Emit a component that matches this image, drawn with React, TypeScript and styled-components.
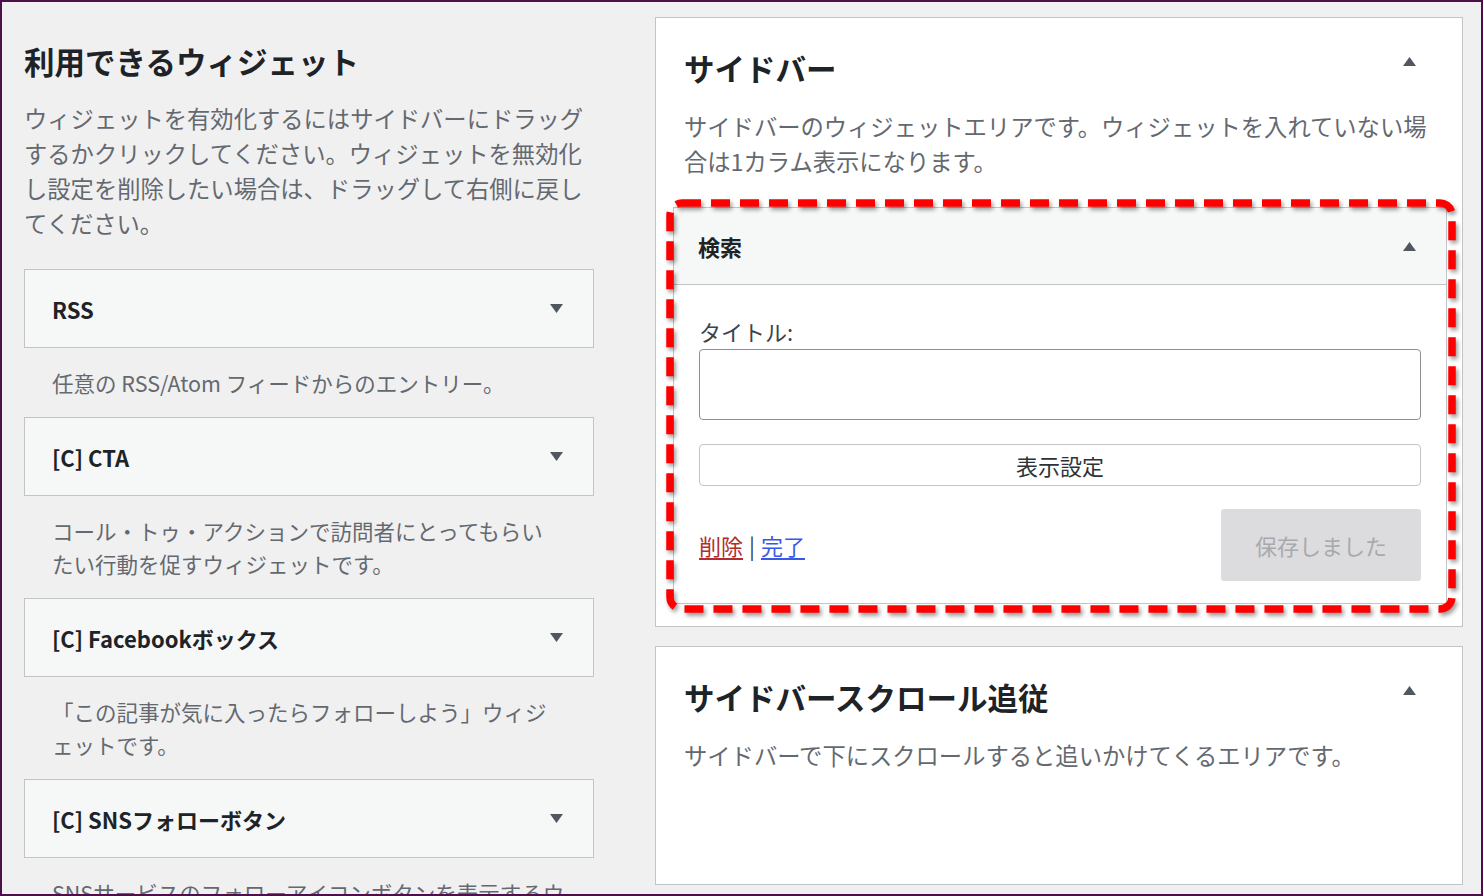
import React from 'react';
import styled, { createGlobalStyle } from 'styled-components';

const GlobalStyle = createGlobalStyle`
	html, body {
		margin: 0;
		padding: 0;
		background: #f0f0f1;
		overflow: hidden;
	}
	* {
		box-sizing: border-box;
	}
`;

const Frame = styled.div`
	width: 1483px;
	height: 896px;
	border: 2px solid #4d0f4c;
	background: #f0f0f1;
	display: flex;
	gap: 61px;
	padding: 15px 18px 0 22px;
	overflow: hidden;
	font-family: "Noto Sans CJK JP", "Noto Sans", sans-serif;
	color: #1d2327;
	line-break: loose;
`;

const LeftColumn = styled.section`
	width: 570px;
	flex-shrink: 0;
	padding-top: 25px;
`;

const RightColumn = styled.section`
	flex: 1;
	display: flex;
	flex-direction: column;
	gap: 19px;
`;

const Heading = styled.h2`
	margin: 0;
	font-size: 30.5px;
	line-height: 39px;
	font-weight: 700;
	color: #1d2327;
`;

const Intro = styled.p`
	margin: 20px 0 28px;
	font-size: 23.3px;
	line-height: 35px;
	color: #646970;
`;

const WidgetCard = styled.div`
	height: 79px;
	display: flex;
	align-items: center;
	justify-content: space-between;
	padding: 0 30px 0 27px;
	background: #f6f7f7;
	border: 1px solid #c3c4c7;
`;

const CardTitle = styled.h3`
	margin: 0;
	font-size: 22px;
	font-weight: 700;
	color: #1d2327;
`;

const CardDesc = styled.p<{ $narrow?: boolean }>`
	margin: 18px 0;
	padding: 0 ${(p) => (p.$narrow ? '40px' : '28px')} 0 28px;
	font-size: 21.5px;
	line-height: 33px;
	color: #646970;
`;

const SidebarBox = styled.div`
	background: #fff;
	border: 1px solid #c3c4c7;
	flex-shrink: 0;
`;

const BoxHeader = styled.div`
	display: flex;
	justify-content: space-between;
	align-items: flex-start;
	padding: 31px 46px 0 28px;
`;

const BoxTitle = styled.h2`
	margin: 0;
	font-size: 30.5px;
	line-height: 39px;
	font-weight: 700;
	color: #1d2327;
`;

const BoxCaret = styled.span`
	display: flex;
	margin-top: 8px;
`;

const BoxDesc = styled.p`
	margin: 21px 0 0;
	padding: 0 28px;
	font-size: 23.3px;
	line-height: 35px;
	color: #646970;
`;

const WidgetList = styled.div<{ $empty?: boolean }>`
	padding: 28px 15px 22px 17px;
	min-height: ${(p) => (p.$empty ? '111px' : 'auto')};
`;

const Marked = styled.div`
	position: relative;
`;

const Annotation = styled.svg`
	position: absolute;
	left: -8px;
	top: -8px;
	pointer-events: none;
	filter: drop-shadow(2px 3px 2px rgba(0, 0, 0, 0.4));
`;

const Widget = styled.div`
	border: 1px solid #c3c4c7;
	background: #fff;
`;

const WidgetHeader = styled.div`
	height: 77px;
	display: flex;
	align-items: center;
	justify-content: space-between;
	padding: 0 30px 0 24px;
	background: #f6f7f7;
	border-bottom: 1px solid #c3c4c7;
`;

const WidgetTitle = styled.h3`
	margin: 0;
	font-size: 22px;
	font-weight: 700;
	color: #1d2327;
`;

const WidgetBody = styled.div`
	padding: 30px 25px 22px 25px;
`;

const Label = styled.label`
	display: block;
	font-size: 22px;
	line-height: 32px;
	color: #3c434a;
`;

const TextInput = styled.input`
	display: block;
	width: 100%;
	height: 71px;
	margin-top: 2px;
	border: 1px solid #8c8f94;
	border-radius: 4px;
	background: #fff;
	font-size: 22px;
	padding: 0 12px;
`;

const WideButton = styled.button`
	display: block;
	width: 100%;
	height: 42px;
	margin-top: 24px;
	border: 1px solid #c3c4c7;
	border-radius: 4px;
	background: #fff;
	font-family: inherit;
	font-size: 22px;
	color: #2c3338;
`;

const Footer = styled.div`
	display: flex;
	align-items: center;
	justify-content: space-between;
	margin-top: 23px;
`;

const Links = styled.div`
	font-size: 22px;
	color: #3c434a;
	display: flex;
	gap: 6px;
`;

const TextLink = styled.a<{ $danger?: boolean }>`
	color: ${(p) => (p.$danger ? '#b32d2e' : '#3858e9')};
	text-decoration: underline;
	text-underline-offset: 3px;
`;

const SaveButton = styled.button`
	width: 200px;
	height: 72px;
	border: 0;
	border-radius: 3px;
	background: #dcdcde;
	color: #a7aaad;
	font-family: inherit;
	font-size: 22px;
`;

function Caret({ up }: { up?: boolean }) {
	return (
		<svg width="13" height="9" viewBox="0 0 13 9">
			<path d={up ? 'M0 9 L6.5 0 L13 9 Z' : 'M0 0 L13 0 L6.5 9 Z'} fill="#50575e" />
		</svg>
	);
}

const available = [
	{ title: 'RSS', desc: '任意の RSS/Atom フィードからのエントリー。' },
	{ title: '[C] CTA', desc: 'コール・トゥ・アクションで訪問者にとってもらいたい行動を促すウィジェットです。', narrow: true },
	{ title: '[C] Facebookボックス', desc: '「この記事が気に入ったらフォローしよう」ウィジェットです。' },
	{ title: '[C] SNSフォローボタン', desc: 'SNSサービスのフォローアイコンボタンを表示するウィジェットです。' },
];

export default function App() {
	return (
		<>
			<GlobalStyle />
			<Frame>
				<LeftColumn>
					<Heading>利用できるウィジェット</Heading>
					<Intro>
						ウィジェットを有効化するにはサイドバーにドラッグするかクリックしてください。ウィジェットを無効化し設定を削除したい場合は、ドラッグして右側に戻してください。
					</Intro>
					{available.map((w) => (
						<div key={w.title}>
							<WidgetCard>
								<CardTitle>{w.title}</CardTitle>
								<Caret />
							</WidgetCard>
							<CardDesc $narrow={w.narrow}>{w.desc}</CardDesc>
						</div>
					))}
				</LeftColumn>

				<RightColumn>
					<SidebarBox>
						<BoxHeader>
							<BoxTitle>サイドバー</BoxTitle>
							<BoxCaret>
								<Caret up />
							</BoxCaret>
						</BoxHeader>
						<BoxDesc>サイドバーのウィジェットエリアです。ウィジェットを入れていない場合は1カラム表示になります。</BoxDesc>
						<WidgetList>
							<Marked>
								<Widget>
									<WidgetHeader>
										<WidgetTitle>検索</WidgetTitle>
										<Caret up />
									</WidgetHeader>
									<WidgetBody>
										<Label htmlFor="search-title">タイトル:</Label>
										<TextInput id="search-title" type="text" />
										<WideButton type="button">表示設定</WideButton>
										<Footer>
											<Links>
												<TextLink $danger href="#">削除</TextLink>
												<span>|</span>
												<TextLink href="#">完了</TextLink>
											</Links>
											<SaveButton type="button" disabled>保存しました</SaveButton>
										</Footer>
									</WidgetBody>
								</Widget>
								<Annotation width="792" height="414" viewBox="0 0 792 414">
									<rect
										x="5"
										y="4"
										width="782"
										height="406"
										rx="12"
										fill="none"
										stroke="#ff0000"
										strokeWidth="7.5"
										strokeDasharray="19 10"
									/>
								</Annotation>
							</Marked>
						</WidgetList>
					</SidebarBox>

					<SidebarBox>
						<BoxHeader>
							<BoxTitle>サイドバースクロール追従</BoxTitle>
							<BoxCaret>
								<Caret up />
							</BoxCaret>
						</BoxHeader>
						<BoxDesc>サイドバーで下にスクロールすると追いかけてくるエリアです。</BoxDesc>
						<WidgetList $empty />
					</SidebarBox>
				</RightColumn>
			</Frame>
		</>
	);
}
